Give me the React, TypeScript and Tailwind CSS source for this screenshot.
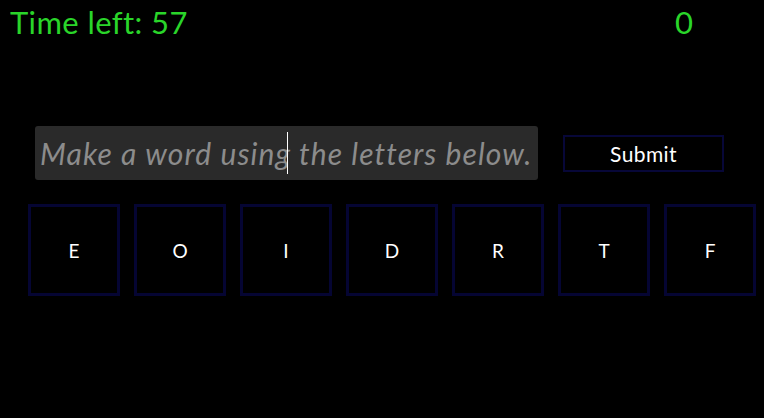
import { useState } from 'react';

const LETTERS = ['E', 'O', 'I', 'D', 'R', 'T', 'F'];

export default function App() {
  const [word, setWord] = useState('');

  return (
    <div
      className="w-[764px] h-[418px] bg-black overflow-hidden"
      style={{ fontFamily: 'Lato, "Open Sans", sans-serif' }}
    >
      {/* Header */}
      <div className="flex items-start justify-between h-[44px]">
        <div className="pl-[10px] pt-[3px] text-[31px] leading-[38px] tracking-[0.4px] text-[#2ad52a]">
          Time left: 57
        </div>
        <div className="w-[160px] pt-[3px] text-[31px] leading-[38px] text-[#2ad52a] text-center">0</div>
      </div>

      {/* Input row */}
      <div className="flex items-center mt-[82px] pl-[35px]">
        <div className="relative">
          <input
            value={word}
            onChange={(e) => setWord(e.target.value)}
            placeholder="Make a word using the letters below."
            className="w-[503px] h-[54px] rounded-[3px] bg-[#2a2a2a] px-[5px] text-[30px] italic tracking-[1.1px] text-white placeholder:text-[#8c8c8c] outline-none caret-white"
          />
          {/* blinking caret as captured */}
          <div className="absolute left-[252px] top-[6px] w-px h-[42px] bg-white pointer-events-none" />
        </div>
        <button className="ml-[25px] w-[161px] h-[37px] border-2 border-[#070738] text-white text-[21px] leading-none tracking-[0.4px]">
          Submit
        </button>
      </div>

      {/* Letter tiles */}
      <div className="flex gap-[14px] mt-[24px] pl-[28px]">
        {LETTERS.map((l) => (
          <div
            key={l}
            className="w-[92px] h-[92px] border-[3px] border-[#050533] flex items-center justify-center pt-[2px] text-white text-[19px]"
          >
            {l}
          </div>
        ))}
      </div>
    </div>
  );
}
